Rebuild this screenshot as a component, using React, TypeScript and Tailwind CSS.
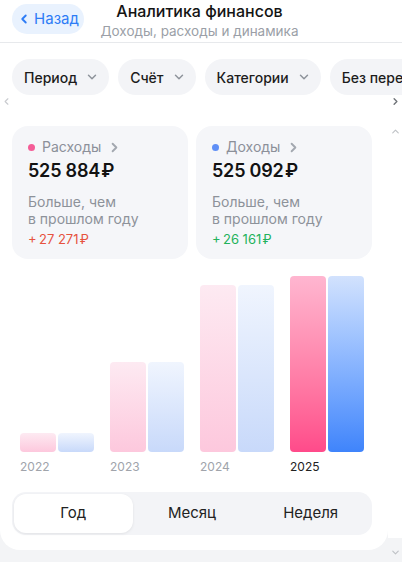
import { ChevronDown, ChevronLeft, ChevronRight, ChevronUp } from "lucide-react";

const filters = ["Период", "Счёт", "Категории", "Без перевода"];

const years = [
  { year: "2022", out: 19, inc: 19 },
  { year: "2023", out: 90, inc: 90 },
  { year: "2024", out: 167, inc: 167 },
  { year: "2025", out: 176, inc: 176, active: true },
];

function StatCard({
  label,
  dot,
  value,
  delta,
  deltaClass,
}: {
  label: string;
  dot: string;
  value: string;
  delta: string;
  deltaClass: string;
}) {
  return (
    <div className="w-[176px] h-[133px] rounded-[16px] bg-[#f5f6f9] pl-4 pr-3 pt-[11px]">
      <div className="flex items-center leading-[20px] text-[14px] text-[#8c9099]">
        <span className={`w-[7px] h-[7px] rounded-full mr-[7px] ${dot}`} />
        {label}
        <ChevronRight size={15} strokeWidth={3} className="ml-[6px] text-[#a3a8b0]" />
      </div>
      <div className="mt-[2px] leading-[23px] text-[18px] font-semibold tracking-[-0.2px] text-[#121212]">
        {value}
      </div>
      <div className="mt-[11px] leading-[17px] text-[14px] text-[#8d929a]">
        Больше, чем
        <br />в прошлом году
      </div>
      <div className={`mt-[3px] leading-[18px] text-[13px] ${deltaClass}`}>{delta}</div>
    </div>
  );
}

export default function App() {
  return (
    <div className="w-[402px] h-[562px] overflow-hidden bg-[#f3f4f6] font-['Inter',sans-serif] flex flex-col">
      <header className="h-[43px] shrink-0 bg-white border-b border-[#e7e9ec] grid grid-cols-[84px_1fr_99px] pt-[2px] pl-3">
        <button className="mt-[2px] h-[30px] w-[72px] rounded-full bg-[#e9f2fe] text-[#2d7cf6] text-[15px] flex items-center justify-center gap-[3px]">
          <ChevronLeft size={14} strokeWidth={3.2} />
          Назад
        </button>
        <div className="text-center">
          <div className="leading-[18px] text-[16px] font-medium text-[#141414] whitespace-nowrap">
            Аналитика финансов
          </div>
          <div className="mt-[2px] leading-[18px] text-[13.5px] text-[#9b9fa7] whitespace-nowrap">
            Доходы, расходы и динамика
          </div>
        </div>
        <div />
      </header>

      <section className="shrink-0 bg-white">
        <div className="flex gap-[9px] pl-3 pt-4 overflow-hidden whitespace-nowrap">
          {filters.map((f) => (
            <div
              key={f}
              className="h-9 shrink-0 rounded-full bg-[#f3f4f7] pl-3 pr-[10px] flex items-center gap-[8px] text-[14px] font-medium text-[#1c1c1c]"
            >
              {f}
              <ChevronDown size={14} strokeWidth={2.5} className="text-[#8e939b]" />
            </div>
          ))}
        </div>
        <div className="h-[13px] flex items-center justify-between px-[1px]">
          <ChevronLeft size={11} strokeWidth={2.5} className="text-[#c9cbcf]" />
          <ChevronRight size={11} strokeWidth={3} className="text-[#6f7378]" />
        </div>
      </section>

      <div className="flex flex-1">
        <main className="w-[388px] h-[442px] bg-white rounded-b-[20px] pt-[18px]">
          <div className="flex gap-2 pl-3">
            <StatCard
              label="Расходы"
              dot="bg-[#f45d97]"
              value={"525\u00a0884\u200a₽"}
              delta={"+\u200927\u00a0271\u200a₽"}
              deltaClass="text-[#e6533e]"
            />
            <StatCard
              label="Доходы"
              dot="bg-[#5f8ff6]"
              value={"525\u00a0092\u200a₽"}
              delta={"+\u200926\u00a0161\u200a₽"}
              deltaClass="text-[#22b25b]"
            />
          </div>

          <div className="h-[193px] px-5 flex items-end gap-4">
            {years.map((y) => (
              <div key={y.year} className="w-[74px] flex items-end gap-[2px]">
                <div
                  className={`w-9 rounded-[4px] bg-linear-to-b ${
                    y.active ? "from-[#ffb6d0] to-[#ff4a8a]" : "from-[#fdeaf2] to-[#fdc8dd]"
                  }`}
                  style={{ height: y.out }}
                />
                <div
                  className={`w-9 rounded-[4px] bg-linear-to-b ${
                    y.active ? "from-[#d2e2fd] to-[#3f84fb]" : "from-[#f0f5fe] to-[#c8d9fa]"
                  }`}
                  style={{ height: y.inc }}
                />
              </div>
            ))}
          </div>
          <div className="mt-2 px-5 flex gap-4">
            {years.map((y) => (
              <div
                key={y.year}
                className={`w-[74px] leading-[14px] text-[12px] ${y.active ? "text-[#222]" : "text-[#a0a4ab]"}`}
              >
                {y.year}
              </div>
            ))}
          </div>

          <div className="mt-[18px] ml-3 w-[360px] h-[43px] rounded-[14px] bg-[#f3f4f7] p-[2px] grid grid-cols-3 text-[15px] text-[#222]">
            <div className="rounded-[12px] bg-white shadow-[0_1px_3px_rgba(0,0,0,0.08)] flex items-center justify-center">
              Год
            </div>
            <div className="flex items-center justify-center">Месяц</div>
            <div className="flex items-center justify-center">Неделя</div>
          </div>
        </main>
        <div className="w-[14px] flex flex-col">
          <div className="flex-1 bg-white flex justify-center pt-[18px]">
            <ChevronUp size={11} strokeWidth={2.5} className="text-[#bfc2c6]" />
          </div>
          <div className="h-[24px] flex justify-center pt-[9px]">
            <ChevronDown size={11} strokeWidth={2.5} className="text-[#bfc2c6]" />
          </div>
        </div>
      </div>
    </div>
  );
}
